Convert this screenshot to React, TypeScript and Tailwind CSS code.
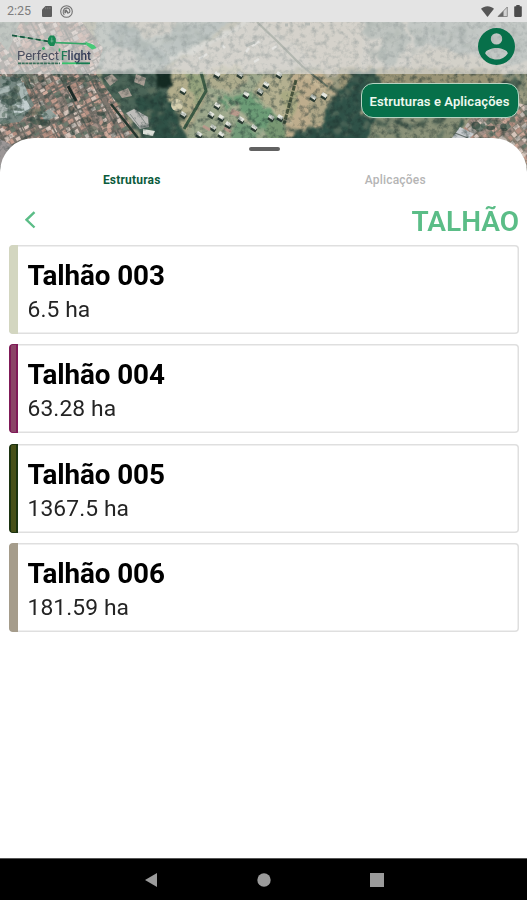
import React, { useState } from 'react';

interface Plot {
  name: string;
  area: string;
  stripe: string;
}

const plots: Plot[] = [
  { name: 'Talhão 003', area: '6.5 ha', stripe: 'bg-[#d3d6c0]' },
  { name: 'Talhão 004', area: '63.28 ha', stripe: 'bg-[#8b4467] border-x-2 border-y border-[#7f1a58]' },
  { name: 'Talhão 005', area: '1367.5 ha', stripe: 'bg-[#475018] border-x-2 border-y border-[#1c3310]' },
  { name: 'Talhão 006', area: '181.59 ha', stripe: 'bg-[#a59c8b]' },
];

const roofColors = ['#c79f90', '#cfaa9b', '#b59082', '#d8c6bc', '#a39087', '#bdb5ae', '#6d7a6d', '#c09a8c'];
const treeColors = ['#2f4a40', '#425c50', '#52695a', '#263f37', '#647562'];

// Cheap repeatable noise, so that the map looks the same on every render
const noise = (n: number) => {
  const v = Math.sin(n * 12.9898) * 43758.5453;
  return v - Math.floor(v);
};

function Roofs({ x, y, cols, rows, seed }: { x: number; y: number; cols: number; rows: number; seed: number }) {
  return (
    <g>
      {Array.from({ length: cols * rows }, (_, i) => {
        const n = i + seed;
        return (
          <rect
            key={i}
            x={x + (i % cols) * 5.2 + Math.floor((i % cols) / 3) * 2.6 + noise(n) * 2}
            y={y + Math.floor(i / cols) * 5.2 + noise(n + 40) * 2}
            width={3.2 + noise(n + 7) * 3}
            height={3 + noise(n + 19) * 2.6}
            fill={roofColors[Math.floor(noise(n + 3) * roofColors.length)]}
          />
        );
      })}
    </g>
  );
}

function Trees({ x, y, w, h, count, seed }: { x: number; y: number; w: number; h: number; count: number; seed: number }) {
  return (
    <g>
      {Array.from({ length: count }, (_, i) => (
        <ellipse
          key={i}
          cx={x + noise(i + seed) * w}
          cy={y + noise(i * 3 + seed + 11) * h}
          rx={1.5 + noise(i + seed + 5) * 4}
          ry={1.2 + noise(i + seed + 9) * 2.8}
          fill={treeColors[i % treeColors.length]}
          opacity={0.65}
        />
      ))}
    </g>
  );
}

function AerialMap() {
  return (
    <svg className="absolute inset-x-0 top-0 h-[180px] w-full" viewBox="0 0 527 180" aria-hidden="true">
      <defs>
        <clipPath id="town">
          <path d="M0 42 8 52 20 22H82L103 48 96 74 116 102 140 140 150 180H0Z" />
        </clipPath>
        <clipPath id="suburb">
          <path d="M459 137 470 118 492 116 504 100 540 108V180H452Z" />
        </clipPath>
        <filter id="grain" x="0" y="0" width="100%" height="100%" colorInterpolationFilters="sRGB">
          <feTurbulence type="fractalNoise" baseFrequency="0.17" numOctaves="4" seed="8" />
          <feColorMatrix values="0 0 0 0 0.12  0 0 0 0 0.2  0 0 0 0 0.19  2.4 0 0 0 -1.1" />
        </filter>
        {/* roughens the drawn edges, so that woods and fields lose their straight outlines */}
        <filter
          id="rough"
          filterUnits="userSpaceOnUse"
          x="-20"
          y="-20"
          width="567"
          height="220"
          colorInterpolationFilters="sRGB"
        >
          <feTurbulence type="fractalNoise" baseFrequency="0.12" numOctaves="3" seed="3" result="n" />
          <feDisplacementMap in="SourceGraphic" in2="n" scale="9" xChannelSelector="R" yChannelSelector="G" />
          <feGaussianBlur stdDeviation="0.8" />
        </filter>
        <filter id="soft">
          <feGaussianBlur stdDeviation="0.6" />
        </filter>
      </defs>
      <g filter="url(#rough)">
        <rect x="-20" y="-20" width="567" height="220" fill="#9a9a80" />

        {/* pale fields at the top */}
        <path d="M165 70 250 15H547V72H452L330 66 210 76Z" fill="#bdb9aa" />
        <path d="M95 15H240L178 60 140 80 96 68Z" fill="#98a59c" />
        <path d="M-10 15H25L8 54-10 44Z" fill="#8b988d" />
        <path d="M258 15H365L358 76H329Z" fill="#beb7a5" />
        <path d="M128 15H182L172 32 150 38 132 28Z" fill="#bab4a4" />
        <path d="M106 52 128 45 136 58 138 76H102Z" fill="#afb1a8" />
        <path d="M160 64 200 47 248 22" stroke="#cccdc2" strokeWidth="4" fill="none" />
        <path d="M118 22 132 26 146 42 164 50 170 66 150 62 138 50 122 48 108 38Z" fill="#6f8583" opacity="0.7" />
        <path d="M172 28 236 18 205 38 172 56 162 46Z" fill="#788b87" opacity="0.65" />
        <path d="M365 15H402L410 44 392 66 378 60 382 40 364 36Z" fill="#778980" opacity="0.75" />
        <path d="M405 15H547V62L505 64 480 55 455 52 432 44 414 48Z" fill="#83948f" opacity="0.75" />
        <g opacity="0.5">
          <Trees x={112} y={24} w={56} h={36} count={26} seed={4} />
          <Trees x={170} y={24} w={36} h={16} count={16} seed={91} />
          <Trees x={366} y={22} w={42} h={38} count={34} seed={61} />
          <Trees x={410} y={28} w={112} h={24} count={46} seed={78} />
        </g>
        <path d="M404 74 416 54 440 48 464 56 506 62 512 76Z" fill="#bab3a0" />

        {/* fields in the middle */}
        <path d="M168 72 202 73 206 92 182 142 165 142 155 110Z" fill="#b3ae8c" />
        <path d="M186 74 202 74 205 92 194 104Z" fill="#96a47e" />
        <path d="M204 75 286 74 344 96 329 142H184L207 96Z" fill="#9da88c" />
        <ellipse cx="228" cy="78" rx="19" ry="12" fill="#aeac8d" stroke="#bfb69a" strokeWidth="1.5" />
        <path d="M262 76 293 74 318 90 290 125 252 96Z" fill="#b4b090" />
        <path d="M232 98 250 92 285 121 270 134 255 125Z" fill="#6c9c76" />
        <path d="M218 99 228 95 236 106 225 110Z" fill="#699a75" />
        <path d="M236 120 262 130 254 142 230 142Z" fill="#729a78" />
        <path d="M272 112 284 126 290 142H262Z" fill="#789772" />
        <path d="M293 72H319L364 108 355 142H285Z" fill="#bead8d" />
        <path d="M280 92 300 90 292 122Z" fill="#a9aa83" />
        <path d="M309 96 328 93 342 107 334 118 309 128Z" fill="#aea687" />
        <path d="M334 68H500L512 85 440 110H390L342 88Z" fill="#9a9476" />
        <path d="M246 93 291 124M220 95 270 142M207 95 230 112" stroke="#c0bca2" strokeWidth="1.5" fill="none" />
        <path d="M302 72 340 104" stroke="#cfc2a0" strokeWidth="2" fill="none" />

        {/* woods */}
        <path d="M98 76 112 69 172 74 166 96 190 142H144L126 115 112 100Z" fill="#4b6558" />
        <path d="M134 100 160 90 176 108 186 142H158L150 122Z" fill="#2f5146" />
        <Trees x={104} y={73} w={50} h={30} count={34} seed={22} />
        <Trees x={140} y={92} w={42} h={44} count={40} seed={33} />
        <path d="M155 70H171L172 86 158 88Z" fill="#142a22" />
        <path d="M344 86 356 72 378 70 366 94 360 116 420 120 463 122 454 142H283L300 130 322 128 328 104Z" fill="#2f5248" />
        <path d="M366 76H380L384 115H364Z" fill="#3c5b4c" />
        <Trees x={328} y={88} w={36} h={50} count={40} seed={44} />
        <Trees x={290} y={128} w={70} h={10} count={24} seed={45} />
        <Trees x={350} y={72} w={35} h={20} count={20} seed={56} />
        <Trees x={504} y={74} w={26} h={14} count={22} seed={66} />
        <path d="M366 142 376 116 440 112 462 118 452 142Z" fill="#8a9178" />
        <Trees x={366} y={120} w={76} h={18} count={18} seed={23} />
      </g>

      <g filter="url(#soft)">
        {/* hedges */}
        <path d="M201 72 206 91 184 129" stroke="#3d5c45" strokeWidth="3" fill="none" strokeLinejoin="round" />
        <path d="M296 80 290 102 284 124" stroke="#48543e" strokeWidth="3" strokeDasharray="5 1" fill="none" />
        <path d="M257 22 278 42 302 66 328 87" stroke="#6b7463" strokeWidth="2.2" fill="none" />

        {/* town on the left */}
        <g clipPath="url(#town)">
          <rect width="160" height="180" fill="#7e766e" />
          <g transform="rotate(-28 60 90)">
            <Roofs x={-50} y={-20} cols={30} rows={42} seed={17} />
            <path d="M-40 60H170M-40 88H170M-40 116H170M8 0V190M36 0V190M66 0V190M92 0V190" stroke="#706f68" strokeWidth="1.6" />
          </g>
          <path d="M0 76 20 78 34 105 20 122 0 124Z" fill="#758a84" opacity="0.9" />
          <path d="M12 105 25 98 31 108 15 116Z" fill="#c3cfcf" />
          <path d="M17 84 24 82 28 94 21 99ZM0 88 9 86 11 91 0 94Z" fill="#aab8b5" />
          <path d="M0 100 8 104 7 118 0 118Z" fill="#b1bab7" />
          <path d="M41 114 49 109 57 116 45 122Z" fill="#93a29d" />
          <path d="M68 86 76 101" stroke="#1f2b28" strokeWidth="3" />
          <g opacity="0.8">
            <Trees x={2} y={76} w={34} h={50} count={30} seed={77} />
            <Trees x={18} y={74} w={90} h={8} count={26} seed={140} />
            <Trees x={30} y={110} w={16} h={20} count={14} seed={170} />
            <Trees x={60} y={80} w={70} h={60} count={16} seed={190} />
          </g>
        </g>
        <path d="M0 139 12 145 0 172Z" fill="#9b9696" />
        <path d="M111 104 138 138" stroke="#26382f" strokeWidth="2.5" />
        <path d="M104 78 112 74 118 80 110 86ZM136 74 146 78 144 86 134 82ZM118 92 128 88 132 96 122 98Z" fill="#a89e94" />
        <path d="M126 113 134 109 148 117 149 127 140 129Z" fill="#bebdba" />
        <path d="M130 114 139 126M137 111 146 124" stroke="#858d88" strokeWidth="1" />
        <path d="M143 129 155 131 153 136 143 134Z" fill="#dcdfd8" />

        {/* suburb on the right */}
        <g clipPath="url(#suburb)">
          <rect x="445" y="96" width="90" height="84" fill="#8e8476" />
          <g transform="rotate(-38 490 138)">
            <Roofs x={430} y={90} cols={18} rows={20} seed={207} />
          </g>
          <Trees x={468} y={118} w={50} h={12} count={9} seed={300} />
        </g>
        <path d="M452 138 460 127 474 134 468 140Z" fill="#c9cdd0" />
        <path d="M455 133 468 138" stroke="#66706c" strokeWidth="1.2" />

        <circle cx="177" cy="105" r="6" fill="#d6cfaf" />

        {/* farm sheds, each with its shadow */}
        {[
          [183, 90], [183, 114], [217, 105], [211, 114], [221, 117],
          [213, 127], [228, 124], [199, 134], [241, 119], [246, 94],
          [266, 84], [260, 91], [271, 117], [280, 117], [313, 97], [324, 95],
          [254, 127], [221, 134], [217, 74], [240, 74], [279, 74],
        ].map(([x, y]) => (
          <g key={`${x}-${y}`} transform={`rotate(32 ${x} ${y})`}>
            <rect x={x - 2} y={y} width="6" height="4" fill="#2c3a32" />
            <rect x={x - 2.5} y={y - 2} width="5.5" height="3.6" fill="#e6e8e0" />
          </g>
        ))}
        <path d="M85 0M252 46 260 41M246 52 249 48M254 62 259 59M272 49 277 46M199 59 207 54M222 45 225 48" stroke="#e4e4dc" strokeWidth="2.4" />
        <path d="M246 46 255 42M285 25h3M305 24h5" stroke="#6f7a70" strokeWidth="3" />
        <path d="M232 109 240 112 238 117 230 114Z" fill="#b89a8c" />
        <path d="M203 126 210 130M224 128 231 132" stroke="#b89a8c" strokeWidth="3" />
      </g>
      <rect width="527" height="180" filter="url(#grain)" opacity="0.6" />
    </svg>
  );
}

function StatusBar() {
  return (
    <div className="relative flex h-[22px] items-center bg-[#e4e4e4] pl-[7px] pr-[5px]">
      <span className="text-[12.5px] leading-none text-[#7d7d7d]">2:25</span>
      <svg className="ml-[11px] h-[11px] w-[10px]" viewBox="0 0 10 11">
        <path d="M3.5 0H9a1 1 0 0 1 1 1v9a1 1 0 0 1-1 1H1a1 1 0 0 1-1-1V3.5Z" fill="#5d5d5d" />
        <path d="M3.7 1.2v2M5.8 1.2v2M7.9 1.2v2" stroke="#858585" strokeWidth="0.8" />
      </svg>
      <svg className="ml-[8px] h-[13px] w-[13px]" viewBox="0 0 13 13" fill="none" stroke="#707070">
        <circle cx="6.5" cy="6.5" r="5.8" strokeWidth="1.1" />
        <path d="M4.3 10C2.2 7.5 3 3.2 6.5 2.9c3 0 4.2 2.8 2.8 5.1" strokeWidth="1.1" />
        <path d="M5.2 4.8v3.5M5.5 4.8l3 3.7" strokeWidth="1.6" />
      </svg>
      <div className="ml-auto flex items-center">
        <svg className="h-[11px] w-[13px]" viewBox="0 0 13 11">
          <path d="M0 2.8C3.6-.6 9.4-.6 13 2.8L6.5 11Z" fill="#565656" />
        </svg>
        <svg className="ml-[3px] h-[11px] w-[11px]" viewBox="0 0 11 11">
          <path d="M1 10.5 10.3 1v9.5Z" fill="#d2d2d2" stroke="#777" strokeWidth="0.8" />
          <path d="M1 10.5 6.5 5v5.5Z" fill="#666" />
        </svg>
        <svg className="ml-[6px] h-[12px] w-[8px]" viewBox="0 0 8 12">
          <path d="M2.3 0h3.4v1.3H7a.8.8 0 0 1 .8.8v9a.8.8 0 0 1-.8.8H1a.8.8 0 0 1-.8-.8v-9a.8.8 0 0 1 .8-.8h1.3Z" fill="#4c4c4c" />
        </svg>
      </div>
    </div>
  );
}

function Logo() {
  return (
    <svg className="h-[38px] w-[88px]" viewBox="10 30 88 38">
      <path d="M12 35.2 50 41.8 90 44.5" stroke="#5fae86" strokeWidth="1" fill="none" />
      <path d="M12 35.3 48 41.3" stroke="#17573f" strokeWidth="1.7" strokeDasharray="5 3" fill="none" />
      <path d="M56 42.8 86 43.8" stroke="#35a767" strokeWidth="1.5" />
      <path d="M85 41.5 94 45 96.5 48 92 49.5 87 45.5Z" fill="#48c977" />
      <path d="M48 38.5 50 35.5h4l1.8 3v4L54 46h-4l-2.2-3Z" fill="#188854" />
      <path d="M51.8 37.5v5M50.5 41h3" stroke="#7fba9c" strokeWidth="0.8" />
      <path d="M43.5 47v3M42 48.5h3M59.500 48.500v3" stroke="#38b36a" strokeWidth="1.5" />
      <text x="17" y="60.2" fontFamily="Roboto, sans-serif" fontSize="13" textLength="42" lengthAdjust="spacingAndGlyphs" fill="#4c4f60">
        Perfect
      </text>
      <text x="61" y="60.2" fontFamily="Roboto, sans-serif" fontSize="13" fontWeight="500" textLength="30" lengthAdjust="spacingAndGlyphs" fill="#343d58">
        <tspan fill="#1f7a56">F</tspan>light
      </text>
      <path d="M18 63.3h42" stroke="#3c705b" strokeWidth="1.7" strokeDasharray="3 0.7" />
      <path d="M62 63.3h15" stroke="#35c26c" strokeWidth="1.8" />
      <path d="M76 63.3h14" stroke="#167c50" strokeWidth="1.8" />
    </svg>
  );
}

function Header() {
  return (
    <header className="relative flex h-[52px] items-start justify-between bg-[#e4e4e4]/60 pl-[10px] pr-[12px]">
      <div className="pt-[8px]">
        <Logo />
      </div>
      <button className="mt-[6px]" aria-label="Perfil">
        <svg className="h-[37px] w-[37px]" viewBox="0 0 37 37">
          <path
            fillRule="evenodd"
            d="M18.5 0a18.5 18.5 0 1 0 0 37 18.5 18.5 0 0 0 0-37Zm0 5.200a5.700 5.700 0 1 1 0 11.400 5.700 5.700 0 0 1 0-11.400Zm0 26.300c-4.700 0-8.800-2.300-11.300-6 .1-3.600 7.500-5.500 11.300-5.500s11.200 1.900 11.300 5.500a13.500 13.500 0 0 1-11.300 6Z"
            fill="#07704a"
          />
        </svg>
      </button>
    </header>
  );
}

function PlotCard({ plot }: { plot: Plot }) {
  return (
    <div className="flex h-[89px] overflow-hidden rounded-[4px] shadow-[inset_0_0_0_1.5px_#dfdfdf]">
      <div className={`w-[9px] shrink-0 rounded-l-[3px] ${plot.stripe}`} />
      <div className="pl-[9.5px] pt-[14px] text-black">
        <h2 className="text-[27.8px] font-bold leading-[33px] tracking-[-0.1px]">{plot.name}</h2>
        <p className="mt-[4px] text-[22.8px] leading-[28px] tracking-[0.1px] text-[#242424]">{plot.area}</p>
      </div>
    </div>
  );
}

function NavigationBar() {
  return (
    <nav className="flex h-[42px] items-center justify-between border-t border-[#555] bg-black pl-[144px] pr-[143px]">
      <svg className="h-[16px] w-[14px]" viewBox="0 0 14 16">
        <path d="M13 1v14L1 8Z" fill="#9b9b9b" />
      </svg>
      <svg className="h-[14px] w-[14px]" viewBox="0 0 14 14">
        <circle cx="7" cy="7" r="6.7" fill="#9b9b9b" />
      </svg>
      <div className="h-[14px] w-[14px] bg-[#9b9b9b]" />
    </nav>
  );
}

export default function App() {
  const [tab, setTab] = useState('estruturas');

  return (
    <div className="relative flex h-[900px] w-[527px] flex-col overflow-hidden bg-white font-['Roboto',sans-serif]">
      <AerialMap />
      <StatusBar />
      <Header />

      <div className="relative flex h-[64px] justify-end pr-[8.5px] pt-[9px]">
        <button className="flex h-[35px] w-[158px] items-center justify-center rounded-[12px] border border-[#b7d5c4] bg-[#07704a] pt-[2px] text-[13px] font-semibold tracking-[0.1px] text-[#eef8ee]">
          Estruturas e Aplicações
        </button>
      </div>

      {/* Bottom sheet */}
      <main className="relative flex flex-1 flex-col rounded-t-[34px] bg-white pt-[9px]">
        <div className="ml-[249px] h-[4px] w-[31px] rounded-full bg-[#626262]" />
        <div className="mt-[21px] flex h-[16px] text-[12px] leading-[16px]">
          <button
            onClick={() => setTab('estruturas')}
            className={`flex-1 ${tab === 'estruturas' ? 'font-bold tracking-[0.2px] text-[#0b5b3c]' : 'font-medium tracking-[0.2px] text-[#b5b5b5]'}`}
          >
            Estruturas
          </button>
          <button
            onClick={() => setTab('aplicacoes')}
            className={`flex-1 ${tab === 'aplicacoes' ? 'font-bold tracking-[0.2px] text-[#0b5b3c]' : 'font-medium tracking-[0.2px] text-[#b5b5b5]'}`}
          >
            Aplicações
          </button>
        </div>

        <div className="mt-[15px] flex h-[34px] items-center justify-between pl-[25px] pr-[8px] text-[#5bbd87]">
          <button aria-label="Voltar">
            <svg className="h-[18px] w-[11px]" viewBox="0 0 11 18" fill="none">
              <path d="M9.5 1.2 1.5 8.8l8 7.7" stroke="currentColor" strokeWidth="2.4" />
            </svg>
          </button>
          <h1 className="pt-[2px] text-[28px] font-semibold leading-[33px]">TALHÃO</h1>
        </div>

        <div className="mt-[8px] flex flex-col gap-[10.4px] pl-[9px] pr-[8px]">
          {plots.map((plot) => (
            <PlotCard key={plot.name} plot={plot} />
          ))}
        </div>
      </main>

      <NavigationBar />
    </div>
  );
}
